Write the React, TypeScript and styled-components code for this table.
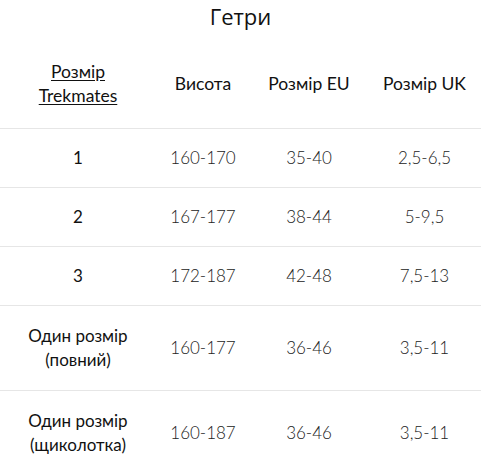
import React from 'react';
import styled, { createGlobalStyle } from 'styled-components';

const GlobalStyle = createGlobalStyle`
  html, body {
    margin: 0;
    padding: 0;
    background: #fff;
  }
  body {
    font-family: Lato, "Noto Sans", sans-serif;
    color: #111;
  }
`;

type Row = {
  size: string[];
  height: string;
  eu: string;
  uk: string;
};

const rows: Row[] = [
  { size: ['1'], height: '160-170', eu: '35-40', uk: '2,5-6,5' },
  { size: ['2'], height: '167-177', eu: '38-44', uk: '5-9,5' },
  { size: ['3'], height: '172-187', eu: '42-48', uk: '7,5-13' },
  { size: ['Один розмір', '(повний)'], height: '160-177', eu: '36-46', uk: '3,5-11' },
  { size: ['Один розмір', '(щиколотка)'], height: '160-187', eu: '36-46', uk: '3,5-11' },
];

const App = () => {
  return (
    <Page>
      <GlobalStyle />
      <Title>Гетри</Title>
      <Table>
        <colgroup>
          <col style={{ width: 156 }} />
          <col style={{ width: 94 }} />
          <col style={{ width: 118 }} />
          <col />
        </colgroup>
        <thead>
          <tr>
            <Head>
              <HeadLink>
                Розмір
                <br />
                Trekmates
              </HeadLink>
            </Head>
            <Head>Висота</Head>
            <Head>Розмір EU</Head>
            <Head>Розмір UK</Head>
          </tr>
        </thead>
        <tbody>
          {rows.map((r, i) => (
            <tr key={i}>
              <SizeCell $tall={r.size.length > 1}>
                {r.size.map((line, j) => (
                  <React.Fragment key={j}>
                    {j > 0 && <br />}
                    {line}
                  </React.Fragment>
                ))}
              </SizeCell>
              <Cell $tall={r.size.length > 1}>{r.height}</Cell>
              <Cell $tall={r.size.length > 1}>{r.eu}</Cell>
              <Cell $tall={r.size.length > 1}>{r.uk}</Cell>
            </tr>
          ))}
        </tbody>
      </Table>
    </Page>
  );
};

const Page = styled.div`
  width: 481px;
  overflow: hidden;
`;

const Title = styled.h2`
  margin: 0;
  height: 40px;
  line-height: 32px;
  text-align: center;
  font-family: "Open Sans", sans-serif;
  font-size: 22px;
  font-weight: 400;
  color: #111;
`;

const Table = styled.table`
  width: 481px;
  border-collapse: collapse;
  table-layout: fixed;
`;

const Head = styled.th`
  padding: 20px 2px 20px;
  font-size: 17.5px;
  font-weight: 400;
  line-height: 24px;
  color: #111;
  text-align: center;
  border-bottom: 1px solid #e6e6e6;
`;

const HeadLink = styled.span`
  text-decoration: underline;
  text-underline-offset: 2px;
`;

const Cell = styled.td<{ $tall?: boolean }>`
  padding: 17px 2px 17px;
  font-size: 17px;
  font-weight: 300;
  line-height: 24px;
  color: #222;
  text-align: center;
  border-bottom: 1px solid #e6e6e6;
  ${(p) => p.$tall && 'padding: 18px 2px 18px;'}
`;

const SizeCell = styled(Cell)`
  font-weight: 400;
  color: #111;
`;

export default App;
